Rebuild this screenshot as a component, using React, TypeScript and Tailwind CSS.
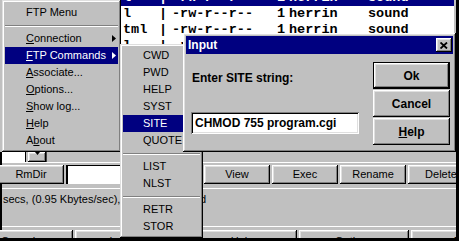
import React from "react";

const raised =
  "shadow-[inset_-1px_-1px_#000,inset_1px_1px_#fff,inset_-2px_-2px_#808080,inset_2px_2px_#dfdfdf]";
const menuFrame =
  "shadow-[inset_-1px_-1px_#000,inset_1px_1px_#dfdfdf,inset_-2px_-2px_#808080,inset_2px_2px_#fff]";
const sunken =
  "shadow-[inset_1px_1px_#808080,inset_-1px_-1px_#fff,inset_2px_2px_#000,inset_-2px_-2px_#dfdfdf]";

const files = [
  { name: "l", sel: true },
  { name: "l" },
  { name: "tml" },
  { name: "l" },
  { name: "l" },
];

function Arrow({ white }: { white?: boolean }) {
  return (
    <svg width="4" height="7" viewBox="0 0 4 7" className="ml-auto">
      <polygon points="0,0 4,3.5 0,7" fill={white ? "#fff" : "#000"} />
    </svg>
  );
}

function Sep() {
  return (
    <div className="h-[9px] pt-[4px]">
      <div className="h-px bg-[#808080]" />
      <div className="h-px bg-white" />
    </div>
  );
}

function MenuItem({
  children,
  sel,
  arrow,
  pl = "pl-[21px]",
}: {
  children: React.ReactNode;
  sel?: boolean;
  arrow?: boolean;
  pl?: string;
}) {
  return (
    <div
      className={`flex h-[17px] items-center pr-[2px] ${pl} ${
        sel ? "bg-[#000080] text-white" : ""
      }`}
    >
      <span>{children}</span>
      {arrow && <Arrow white={sel} />}
    </div>
  );
}

function Btn({ label, w }: { label: string; w: string }) {
  return (
    <div className={`${w} shrink-0 h-[19px] flex items-center justify-center bg-[#c0c0c0] ${raised}`}>
      {label}
    </div>
  );
}

function BigBtn({ label }: { label: string }) {
  return (
    <div className={`w-[110px] shrink-0 h-[22px] flex items-center justify-center bg-[#c0c0c0] ${raised}`}>
      {label}
    </div>
  );
}

export default function App() {
  return (
    <div className="relative w-[459px] h-[241px] overflow-hidden bg-black font-['Liberation_Sans',Arial,sans-serif] text-[11px] leading-[13px] text-black">
      {/* background window */}
      <div className="mr-[3px] h-[238px] bg-[#c0c0c0] overflow-hidden flex flex-col">
        <div className="flex h-[152px] shrink-0">
          <div className="w-[121px] shrink-0" />
          <div className="flex-1 mr-[2px] bg-white overflow-hidden font-['Liberation_Mono',monospace] font-bold text-[13.5px] leading-[16px]">
            {files.map((f, i) => (
              <div
                key={i}
                className={`flex h-[16px] items-center pl-[2px] whitespace-pre ${
                  i === 0 ? "-mt-[10px] bg-[#000080] text-white" : ""
                }`}
              >
                <span className="w-[36px] shrink-0">{f.name}</span>
                <span className="w-[13px] shrink-0">|</span>
                <span className="w-[105px] shrink-0">-rw-r--r--</span>
                <span className="w-[12px] shrink-0">1</span>
                <span className="w-[79px] shrink-0">herrin</span>
                <span>sound</span>
              </div>
            ))}
          </div>
        </div>

        <div className="border-l-[2px] border-black flex-1 flex flex-col">
          {/* scroll strip */}
          <div className="h-[10px] flex shrink-0">
            <div className="w-[24px] bg-white border-r border-black" />
            <div className={`ml-[2px] w-[18px] bg-[#c0c0c0] flex justify-center ${raised}`}>
              <svg width="5" height="4" viewBox="0 0 5 4">
                <polygon points="0,0 5,0 2.5,3" fill="#000" />
              </svg>
            </div>
            <div className="w-px bg-[#404040]" />
          </div>
          <div className="h-px bg-white shrink-0" />
          <div className="h-[2px] shrink-0" />

          {/* command buttons */}
          <div className="flex gap-[2px] h-[19px] shrink-0 -ml-[4px]">
            <Btn label="RmDir" w="w-[66px]" />
            <div className="w-[136px] shrink-0 bg-white border-l-[2px] border-t border-black" />
            <Btn label="View" w="w-[66px]" />
            <Btn label="Exec" w="w-[66px]" />
            <Btn label="Rename" w="w-[66px]" />
            <Btn label="Delete" w="w-[66px]" />
          </div>

          <div className="h-[4px] shrink-0" />
          <div className="h-px bg-white shrink-0" />
          <div className="h-[37px] shrink-0 pt-[4px] pl-px whitespace-nowrap">
            secs, (0.95 Kbytes/sec),<span className="tracking-[-0.6px]"> transfer succeeded</span>
          </div>
          <div className="h-px bg-white shrink-0" />
          <div className="h-[3px] shrink-0" />
          <div className="flex gap-[2px] -ml-[39px]">
            <BigBtn label="Cancel" />
            <BigBtn label="LogWnd" />
            <BigBtn label="Help" />
            <BigBtn label="Options" />
            <BigBtn label="About" />
          </div>
        </div>
      </div>

      {/* popup menu */}
      <div className={`absolute left-[2px] top-0 w-[119px] h-[152px] bg-[#c0c0c0] pt-[4px] px-[3px] pb-[3px] ${menuFrame}`}>
        <MenuItem>FTP Menu</MenuItem>
        <Sep />
        <MenuItem arrow>
          <u>C</u>onnection
        </MenuItem>
        <MenuItem arrow sel>
          <u>F</u>TP Commands
        </MenuItem>
        <MenuItem>
          <u>A</u>ssociate...
        </MenuItem>
        <MenuItem>
          <u>O</u>ptions...
        </MenuItem>
        <MenuItem>
          <u>S</u>how log...
        </MenuItem>
        <MenuItem>
          <u>H</u>elp
        </MenuItem>
        <MenuItem>
          A<u>b</u>out
        </MenuItem>
      </div>

      {/* FTP commands submenu */}
      <div className={`absolute left-[120px] top-[44px] w-[83px] h-[194px] bg-[#c0c0c0] p-[3px] ${menuFrame}`}>
        <MenuItem pl="pl-[20px]">CWD</MenuItem>
        <MenuItem pl="pl-[20px]">PWD</MenuItem>
        <MenuItem pl="pl-[20px]">HELP</MenuItem>
        <MenuItem pl="pl-[20px]">SYST</MenuItem>
        <MenuItem pl="pl-[20px]" sel>
          SITE
        </MenuItem>
        <MenuItem pl="pl-[20px]">QUOTE</MenuItem>
        <Sep />
        <MenuItem pl="pl-[20px]">LIST</MenuItem>
        <MenuItem pl="pl-[20px]">NLST</MenuItem>
        <Sep />
        <MenuItem pl="pl-[20px]">RETR</MenuItem>
        <MenuItem pl="pl-[20px]">STOR</MenuItem>
      </div>

      {/* Input dialog */}
      <div className={`absolute left-[183px] top-[33px] w-[273px] h-[119px] bg-[#c0c0c0] p-[3px] font-bold text-[12px] leading-[14px] ${raised}`}>
        <div className="h-[18px] bg-[#000080] flex items-center justify-between">
          <span className="pl-[2px] text-white">Input</span>
          <div className={`w-[16px] h-[14px] mr-px bg-[#c0c0c0] flex items-center justify-center ${raised}`}>
            <svg width="8" height="7" viewBox="0 0 8 7">
              <path d="M0.5 0.5 L7 6.5 M7 0.5 L0.5 6.5" stroke="#000" strokeWidth="1.8" />
            </svg>
          </div>
        </div>
        <div className="flex">
          <div className="w-[187px] shrink-0 pl-[5px]">
            <div className="mt-[17px] pl-px">Enter SITE string:</div>
            <div className={`mt-[27px] w-[168px] h-[22px] bg-white flex items-center pl-[4px] ${sunken}`}>
              CHMOD 755 program.cgi
            </div>
          </div>
          <div className="flex flex-col gap-[1px] mt-[8px]">
            <div className="w-[77px] h-[27px] border border-black">
              <div className={`h-full flex items-center justify-center ${raised}`}>Ok</div>
            </div>
            <div className={`w-[77px] h-[27px] flex items-center justify-center ${raised}`}>Cancel</div>
            <div className={`w-[77px] h-[27px] flex items-center justify-center ${raised}`}>
              <span>
                <u>H</u>elp
              </span>
            </div>
          </div>
        </div>
      </div>
    </div>
  );
}
